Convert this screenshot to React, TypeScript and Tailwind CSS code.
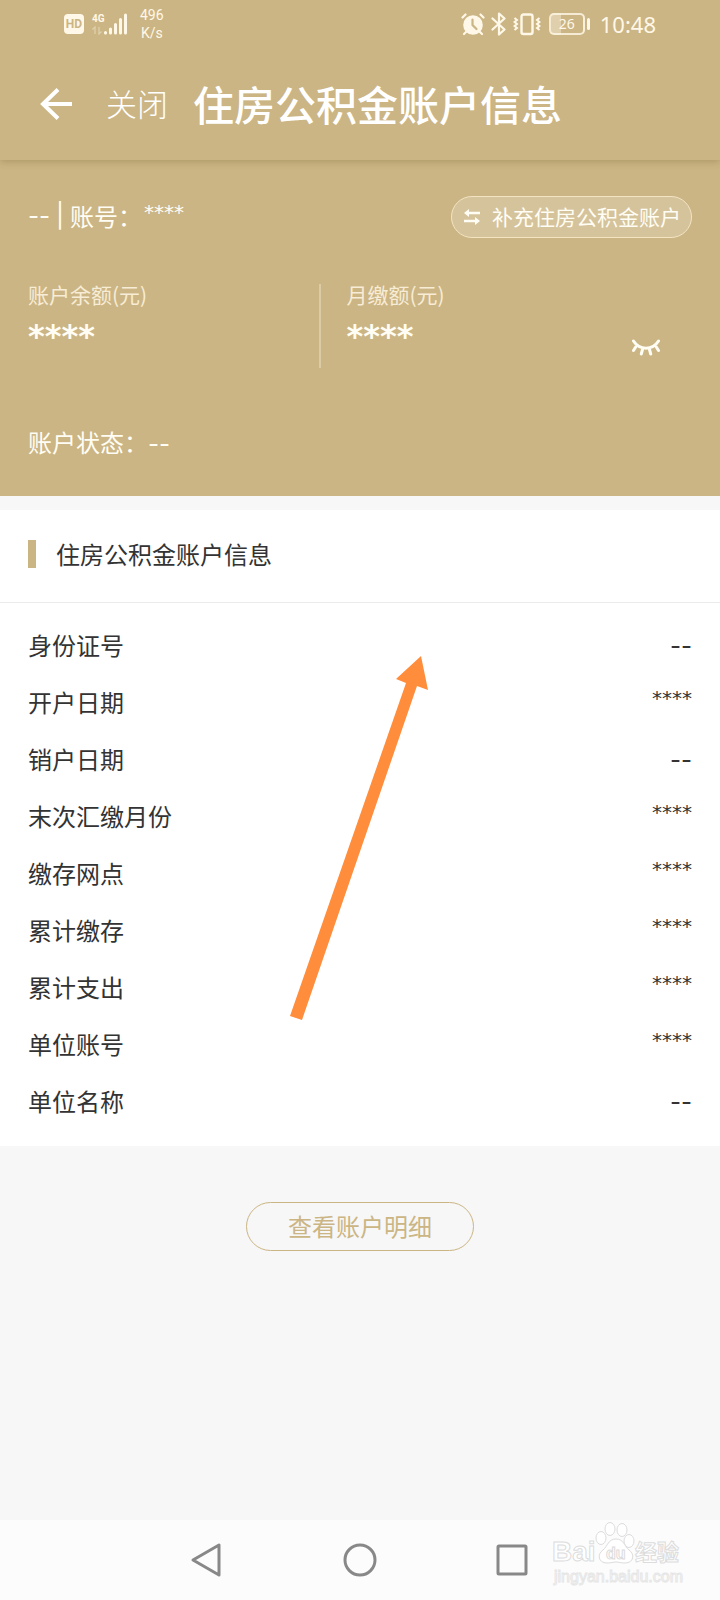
import type { ReactNode } from "react";

const accountRows = [
  { label: "身份证号", value: "--" },
  { label: "开户日期", value: "****" },
  { label: "销户日期", value: "--" },
  { label: "末次汇缴月份", value: "****" },
  { label: "缴存网点", value: "****" },
  { label: "累计缴存", value: "****" },
  { label: "累计支出", value: "****" },
  { label: "单位账号", value: "****" },
  { label: "单位名称", value: "--" },
];

function StatusBar() {
  return (
    <div className="flex h-12 items-center justify-between px-16 text-[#fff8e8]">
      <div className="flex items-center">
        <span className="flex h-5 w-5 items-center justify-center rounded bg-[#fff8e8] font-['Roboto',sans-serif] text-xs font-bold text-[#cbb584]">
          HD
        </span>
        <svg className="ml-2 h-6 w-9" viewBox="0 0 36 24" fill="currentColor">
          <text x="0" y="10" fontSize="10" fontWeight="700" fontFamily="Roboto, sans-serif">
            4G
          </text>
          <path d="M3 22v-7l-2.500 2.500M7 15v7l2.500-2.500" fill="none" stroke="currentColor" strokeWidth="1.300" opacity=".4" />
          <g stroke="currentColor" strokeWidth="3" strokeLinecap="round">
            <path d="M13.500 20.500v.5M18.500 17v4M23.500 12.500v8.500M28.500 7.500v13.500M33.500 3v18" />
          </g>
        </svg>
        <div className="ml-3 text-center font-['Roboto',sans-serif] text-sm leading-[18px]">
          <div>496</div>
          <div>K/s</div>
        </div>
      </div>
      <div className="flex items-center">
        <svg className="h-6 w-6" viewBox="0 0 24 24" fill="none" stroke="currentColor" strokeLinecap="round">
          <circle cx="12" cy="13" r="9.800" fill="currentColor" stroke="none" />
          <path d="M1.500 5.500l3-3M22.500 5.500l-3-3M5 20l-2 2M19 20l2 2" strokeWidth="2.200" />
          <path d="M11.500 7.500v5.500l4 4" stroke="#cbb584" strokeWidth="2.200" />
        </svg>
        <svg className="ml-1.5 h-6 w-4" viewBox="0 0 16 24" fill="none" stroke="currentColor" strokeWidth="2.200" strokeLinejoin="round" strokeLinecap="round">
          <path d="M1.500 6.500l12 11-5.500 5v-21l5.500 5-12 11" />
        </svg>
        <svg className="ml-1.5 h-6 w-7" viewBox="0 0 28 24" fill="none" stroke="currentColor" strokeWidth="2.400">
          <rect x="8.500" y="2.500" width="11" height="19.500" rx="2" />
          <path d="M1.500 6l2.500 2-2.500 2 2.500 2-2.500 2 2.500 2-2.500 2M26.500 6l-2.500 2 2.500 2-2.500 2 2.500 2-2.500 2 2.500 2" strokeWidth="2" />
        </svg>
        <div className="ml-2 flex items-center gap-0.5">
          <span className="flex h-[22px] w-9 items-center justify-center rounded-[5px] border-2 border-[#fff8e8]/80 bg-linear-to-r from-[#fff8e8]/40 from-30% to-transparent to-30% font-['Noto_Sans',sans-serif] text-sm">
            26
          </span>
          <span className="h-3 w-[3px] rounded-sm bg-[#fff8e8]" />
        </div>
        <span className="ml-2.5 font-['Noto_Sans',sans-serif] text-[22px] leading-6">10:48</span>
      </div>
    </div>
  );
}

function Header() {
  return (
    <header className="relative z-10 h-40 bg-[#cbb584] shadow-[0_1px_8px_rgba(90,65,20,0.3)]">
      <StatusBar />
      <div className="flex h-28 items-center pl-10 text-white">
        <button type="button" aria-label="返回">
          <svg className="h-8 w-8" viewBox="0 0 32 32" fill="none" stroke="currentColor" strokeWidth="4">
            <path d="M32 16H3M18 1.500L3 16l15 14.500" />
          </svg>
        </button>
        <button type="button" className="ml-[34px] pb-0.5 text-[31px] font-light">
          关闭
        </button>
        <h1 className="ml-[25px] font-['KaiTi','STKaiti','Noto_Sans_CJK_SC',serif] text-[41px] font-medium">
          住房公积金账户信息
        </h1>
      </div>
    </header>
  );
}

// Hidden amounts are drawn as stars, missing ones as dashes
function Value({ children }: { children: string }) {
  if (children === "--") {
    return <span className="font-['Inter',sans-serif]">--</span>;
  }
  return <span className="block pb-2 font-['DejaVu_Sans',sans-serif] text-xl">{children}</span>;
}

function Amount({ label }: { label: string }) {
  return (
    <div>
      <div className="text-[21px] leading-5 text-[#f7ecd6]">{label}</div>
      <div className="mb-3 mt-3.5 font-['DejaVu_Sans',sans-serif] text-[32px] font-bold leading-9">****</div>
    </div>
  );
}

function Summary() {
  return (
    <section className="h-84 bg-[#cbb584] px-7 pt-9 text-2xl text-[#fffdf4]">
      <div className="flex h-[42px] items-center justify-between">
        <div className="flex items-center pb-0.5 leading-9">
          <Value>--</Value>
          <span className="px-1.5 font-['Inter',sans-serif]">|</span>
          <span className="pr-0.5">账号：</span>
          <Value>****</Value>
        </div>
        <button
          type="button"
          className="flex h-[42px] items-center gap-3 rounded-full border border-[#f3e4c2] bg-white/20 pl-3 pr-2.5 text-[21px]"
        >
          <svg className="h-4 w-4" viewBox="0 0 16 16" fill="currentColor">
            <path d="M0 4l5-4v2.700h11v2.600H5V8zM16 12l-5-4v2.700H0v2.600h11V16z" />
          </svg>
          <span className="pb-0.5">补充住房公积金账户</span>
        </button>
      </div>

      <div className="mt-[46px] grid grid-cols-[7fr_9fr]">
        <Amount label="账户余额(元)" />
        <div className="flex justify-between border-l-2 border-[#dccca6] pl-[26px] pr-8">
          <Amount label="月缴额(元)" />
          <button type="button" aria-label="显示金额" className="mt-11 h-10">
            <svg className="h-5 w-7" viewBox="0 0 28 20" fill="none" stroke="currentColor" strokeWidth="3" strokeLinecap="round">
              <path d="M1.500 3c6 9.500 19 9.500 25 0M4 8.500l-2.500 4M10.500 11.500l-1.200 4.500M17.500 11.500l1.200 4.500M24 8.500l2.500 4" />
            </svg>
          </button>
        </div>
      </div>

      <div className="mt-14 leading-9">
        账户状态：<Value>--</Value>
      </div>
    </section>
  );
}

function PointerArrow() {
  return (
    <svg className="pointer-events-none absolute left-[288px] top-[144px] h-[368px] w-[144px]" viewBox="0 0 144 368" fill="#ff8d3b">
      <path d="M133 2l7 34-11-4L14 366 2 362 118 29l-10-4z" />
    </svg>
  );
}

function AccountInfo() {
  return (
    <section className="relative mt-3.5 bg-white pb-4 text-2xl text-[#333]">
      <div className="flex h-[93px] items-center gap-5 border-b border-[#ebebeb] px-7 pb-1">
        <span className="h-7 w-2 bg-[#cbb584]" />
        <h2>住房公积金账户信息</h2>
      </div>
      <dl className="pt-3.5">
        {accountRows.map((row) => (
          <div key={row.label} className="flex h-[57px] items-center justify-between px-7 pb-0.5">
            <dt>{row.label}</dt>
            <dd>
              <Value>{row.value}</Value>
            </dd>
          </div>
        ))}
      </dl>
      <PointerArrow />
    </section>
  );
}

function NavButton({ label, children }: { label: string; children: ReactNode }) {
  return (
    <button type="button" aria-label={label}>
      <svg className="h-9 w-9" viewBox="0 0 36 36" fill="none" stroke="#888" strokeWidth="3" strokeLinejoin="round">
        {children}
      </svg>
    </button>
  );
}

function Watermark() {
  return (
    <svg
      className="absolute bottom-4 right-8 h-16 w-[134px] overflow-visible"
      viewBox="0 0 134 64"
      fill="#fff"
      stroke="#dcdcdc"
      strokeWidth="1"
      fontFamily="'Liberation Sans', 'Noto Sans CJK SC', sans-serif"
      fontWeight="700"
    >
      <text x="-2" y="41" fontSize="28">Bai</text>
      <ellipse cx="47" cy="18" rx="5" ry="6.500" />
      <ellipse cx="56" cy="9" rx="5" ry="6.500" />
      <ellipse cx="68" cy="10" rx="5" ry="6.500" />
      <ellipse cx="75" cy="21" rx="5" ry="6.500" />
      <path d="M62 19c-8 0-8 7-13 11-6 4-5 13 4 13 4 0 6-1 9-1s5 1 9 1c9 0 10-9 4-13-5-4-5-11-13-11z" />
      <text x="52" y="39" fontSize="16">du</text>
      <text x="81" y="40" fontSize="22">经验</text>
      <text x="0" y="62" fontSize="16" fontWeight="400" stroke="#e6e6e6">jingyan.baidu.com</text>
    </svg>
  );
}

function NavBar() {
  return (
    <nav className="relative flex h-20 items-center justify-center gap-[116px] bg-[#fcfcfc]">
      <NavButton label="后退">
        <path d="M29 3v30L3 18z" />
      </NavButton>
      <NavButton label="主页">
        <circle cx="18" cy="18" r="15" />
      </NavButton>
      <NavButton label="最近任务">
        <rect x="4" y="4" width="28" height="28" rx="1" />
      </NavButton>
      <Watermark />
    </nav>
  );
}

export default function App() {
  return (
    <div className="flex min-h-screen flex-col bg-[#f7f7f7] font-['Noto_Sans_CJK_SC',sans-serif]">
      <Header />
      <main className="flex-1">
        <Summary />
        <AccountInfo />
        <div className="mt-14 flex justify-center">
          <button type="button" className="h-[49px] rounded-full border border-[#cbb584] px-[41px] pb-0.5 text-2xl text-[#cbb584]">
            查看账户明细
          </button>
        </div>
      </main>
      <NavBar />
    </div>
  );
}
